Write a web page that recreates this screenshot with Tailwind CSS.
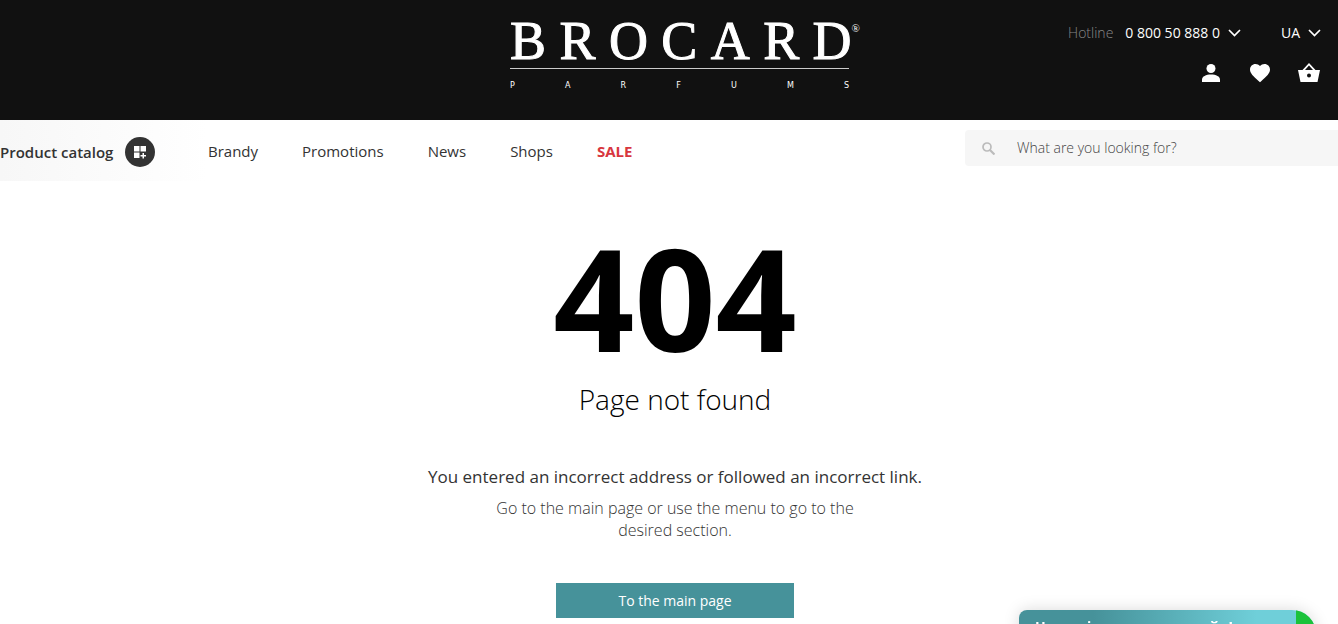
<!DOCTYPE html>
<html lang="en">
<head>
<meta charset="utf-8">
<meta name="viewport" content="width=device-width, initial-scale=1">
<title>Brocard – Page not found</title>
<script src="https://cdn.jsdelivr.net/npm/@tailwindcss/browser@4"></script>
</head>
<body class="flex h-screen flex-col overflow-hidden bg-white font-['Open_Sans',sans-serif] text-[#333]">
<header class="grid h-[120px] shrink-0 grid-cols-[1fr_350px_1fr] bg-[#111] text-white">
  <div class="col-start-2 pl-4">
    <a href="#" aria-label="Brocard Parfums" class="block w-[350px] pt-[14px]">
      <span class="flex justify-between font-['Liberation_Serif',serif] text-[54px] leading-[54px] [-webkit-text-stroke:1px_white]">
        <span>B</span><span>R</span><span>O</span><span>C</span><span>A</span><span>R</span><span class="flex">D<sup class="top-0 pt-2 text-[11px] leading-3 [-webkit-text-stroke:0]">®</sup></span>
      </span>
      <span class="mr-[11px] flex justify-between border-t border-[#ccc] pt-3 font-['DejaVu_Sans',sans-serif] text-[8px] leading-[10px]">
        <span>P</span><span>A</span><span>R</span><span>F</span><span>U</span><span>M</span><span>S</span>
      </span>
    </a>
  </div>
  <div class="flex flex-col items-end gap-[18px] pt-[23px] pr-[17px]">
    <div class="flex items-center text-sm leading-5">
      <span class="mr-3 font-light text-[#888]">Hotline</span>
      <button class="mr-10 flex items-center gap-2">0 800 50 888 0
        <svg width="13" height="8" viewBox="0 0 13 8" fill="none" stroke="currentColor" stroke-width="1.700"><path d="M1 1l5.500 5.500L12 1"/></svg>
      </button>
      <button class="flex items-center gap-2">UA
        <svg width="13" height="8" viewBox="0 0 13 8" fill="none" stroke="currentColor" stroke-width="1.700"><path d="M1 1l5.500 5.500L12 1"/></svg>
      </button>
    </div>
    <div class="flex items-center gap-[25px]">
      <button aria-label="Account"><svg class="size-6" viewBox="0 0 24 24" fill="currentColor"><circle cx="12" cy="7.500" r="4.500"/><path d="M3 21v-2.500c0-3 4-5 9-5s9 2 9 5V21z"/></svg></button>
      <button aria-label="Favourites"><svg class="size-6" viewBox="0 0 24 24" fill="currentColor"><path d="M12 21.350l-1.450-1.320C5.400 15.360 2 12.280 2 8.500 2 5.420 4.420 3 7.500 3c1.740 0 3.410.81 4.500 2.090C13.090 3.810 14.760 3 16.500 3 19.580 3 22 5.420 22 8.500c0 3.780-3.400 6.860-8.550 11.540z"/></svg></button>
      <button aria-label="Basket"><svg class="size-6" viewBox="0 0 24 24" fill="currentColor"><path fill-rule="evenodd" d="M1 9h4.500L12 2l6.500 7H23l-2.500 12h-17zM8 9h8l-4-4.500zM12 12.500a2 2 0 100 4 2 2 0 000-4z"/></svg></button>
    </div>
  </div>
</header>
<nav class="flex h-[61px] shrink-0 items-start text-[15px] leading-6">
  <div class="flex h-full w-[208px] items-center bg-linear-to-r from-[#f7f7f7] to-white pt-[2px]">
    <button class="flex items-center gap-3 font-semibold whitespace-nowrap">Product catalog
      <span class="flex size-[30px] items-center justify-center rounded-full bg-[#333] text-white"><svg width="14" height="14" viewBox="0 0 14 14" fill="currentColor"><path d="M1 1h5.500v5.500H1zM7.500 1H13v5.500H7.500zM1 7.500h5.500V13H1zM9.500 8h1.500v2h2v1.500h-2v2H9.500v-2h-2V10h2z"/></svg></span>
    </button>
  </div>
  <div class="flex items-center gap-11 pt-[19px]">
    <a href="#">Brandy</a><a href="#">Promotions</a><a href="#">News</a><a href="#">Shops</a><a href="#" class="font-bold text-[#d8373f]">SALE</a>
  </div>
  <label class="mt-[10px] ml-auto flex h-9 w-[373px] items-center gap-[22px] rounded-l bg-[#f6f6f6] pl-[17px]">
    <svg class="shrink-0 text-[#bbb]" width="13" height="13" viewBox="0 0 13 13" fill="none" stroke="currentColor"><circle cx="5" cy="5" r="4" stroke-width="1.700"/><path d="M8 8l4.500 4.500" stroke-width="2.200"/></svg>
    <input type="search" aria-label="Search" placeholder="What are you looking for?" class="min-w-0 flex-1 bg-transparent text-sm font-light outline-none placeholder:text-[#444]">
  </label>
</nav>
<main class="flex flex-col items-center pt-11 pl-3 text-center">
  <h1 class="text-[142px] leading-[144px] font-bold text-black">404</h1>
  <h2 class="mt-3 text-[28px] leading-9 font-light text-black">Page not found</h2>
  <p class="mt-12 text-[17px] leading-6">You entered an incorrect address or followed an incorrect link.</p>
  <p class="mt-2 w-[380px] text-base leading-[22px] font-light">Go to the main page or use the menu to go to the desired section.</p>
  <a href="#" class="mt-[42px] flex h-[35px] w-[238px] items-center justify-center bg-[#46929a] text-sm font-medium text-white">To the main page</a>
</main>
<button class="fixed right-[22px] bottom-[-26px] flex h-10 w-[297px] overflow-hidden rounded-tl-lg rounded-tr-[24px] bg-linear-to-r from-[#46929a] from-25% to-[#6fcfd9] to-80% pt-[7px] pl-4 text-left text-sm leading-5 font-bold text-white shadow-[0_0_16px_rgba(0,0,0,0.15)]">
  <span lang="uk">Напишіть нам, ми онлайн!</span>
  <span class="absolute top-0 right-0 h-10 w-5 bg-[#1bc23a]"></span>
</button>
</body>
</html>
